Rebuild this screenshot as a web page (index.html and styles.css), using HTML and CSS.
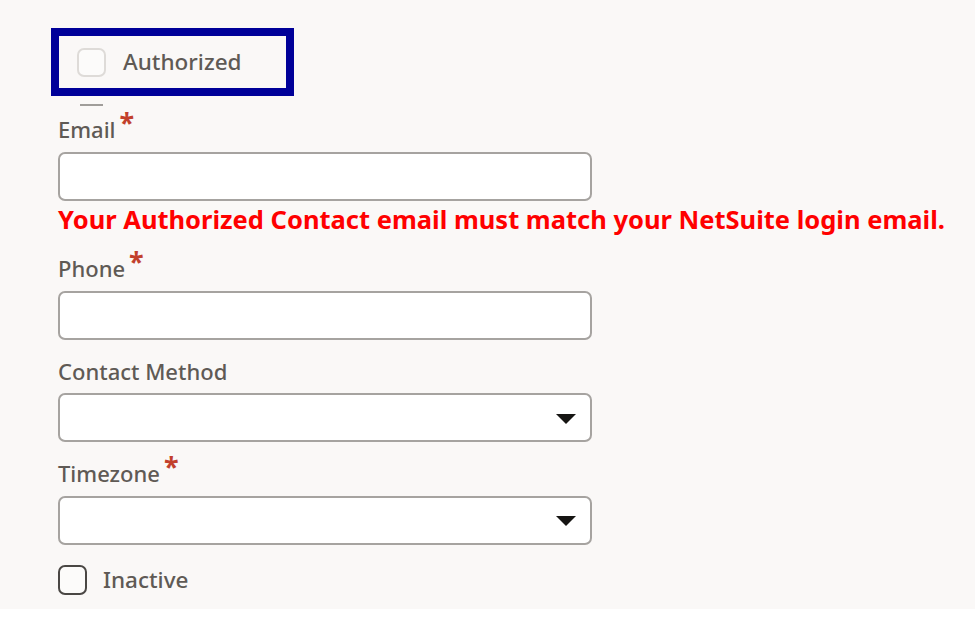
FILE: index.html
```html
<!DOCTYPE html>
<html lang="en">
<head>
<meta charset="utf-8">
<title>Contact</title>
<link rel="stylesheet" href="styles.css">
</head>
<body>
<div class="page">
  <div class="auth-box">
    <span class="check check-light"></span>
    <span class="check-label">Authorized</span>
  </div>
  <div class="dash"></div>

  <div class="field field-email">
    <div class="label">Email<span class="req">*</span></div>
    <div class="input"></div>
  </div>
  <div class="error">Your Authorized Contact email must match your NetSuite login email.</div>

  <div class="field field-phone">
    <div class="label">Phone<span class="req">*</span></div>
    <div class="input"></div>
  </div>

  <div class="field field-after">
    <div class="label">Contact Method</div>
    <div class="input select">
      <svg class="caret" width="20" height="10" viewBox="0 0 20 10"><path d="M0 0 H20 L10 10 Z" fill="#161513"/></svg>
    </div>
  </div>

  <div class="field field-after">
    <div class="label">Timezone<span class="req">*</span></div>
    <div class="input select">
      <svg class="caret" width="20" height="10" viewBox="0 0 20 10"><path d="M0 0 H20 L10 10 Z" fill="#161513"/></svg>
    </div>
  </div>

  <div class="inactive-row">
    <span class="check check-dark"></span>
    <span class="check-label">Inactive</span>
  </div>
</div>
</body>
</html>
```

FILE: styles.css
```css
html, body {
  margin: 0;
  padding: 0;
  background: #ffffff;
}

.page {
  background: #faf8f7;
  height: 609px;
  box-sizing: border-box;
  padding: 28px 0 0 58px;
  font-family: "Noto Sans", "Open Sans", sans-serif;
  color: #5f5a55;
}

.auth-box {
  margin-left: -7px;
  width: 243px;
  height: 68px;
  box-sizing: border-box;
  border: 8px solid #000099;
  display: flex;
  align-items: center;
  padding-left: 18px;
  gap: 17px;
}

.check {
  display: inline-block;
  width: 29px;
  height: 29px;
  box-sizing: border-box;
  border-radius: 7px;
  background: #fcfbfa;
  flex: none;
}

.check-light {
  border: 2px solid #dedbd8;
}

.check-dark {
  border: 2px solid #4a4744;
  height: 30px;
}

.check-label {
  font-size: 22.5px;
  line-height: 30px;
  font-weight: 500;
}

.dash {
  margin: 8px 0 0 22px;
  width: 23px;
  height: 2px;
  background: #a09d9a;
}

.label {
  font-size: 22px;
  line-height: 30px;
  font-weight: 500;
  white-space: nowrap;
}

.req {
  color: #c2402c;
  font-weight: 700;
  font-size: 27px;
  line-height: 18px;
  vertical-align: top;
  margin-left: 4px;
}

.field-email {
  margin-top: 8px;
}

.field-phone {
  margin-top: 19.5px;
}

.field-after {
  margin-top: 16px;
}

.input {
  margin-top: 7.5px;
  width: 534px;
  height: 49px;
  box-sizing: border-box;
  border: 2px solid #a6a3a0;
  border-radius: 7px;
  background: #ffffff;
}

.select {
  display: flex;
  align-items: center;
  justify-content: flex-end;
  padding-right: 14px;
}

.caret {
  display: block;
  margin-top: 2px;
}

.error {
  margin-top: 3px;
  color: #ff0000;
  font-weight: 700;
  font-size: 25.5px;
  line-height: 30px;
  white-space: nowrap;
}

.inactive-row {
  margin-top: 20px;
  display: flex;
  align-items: center;
  gap: 16px;
}
```
